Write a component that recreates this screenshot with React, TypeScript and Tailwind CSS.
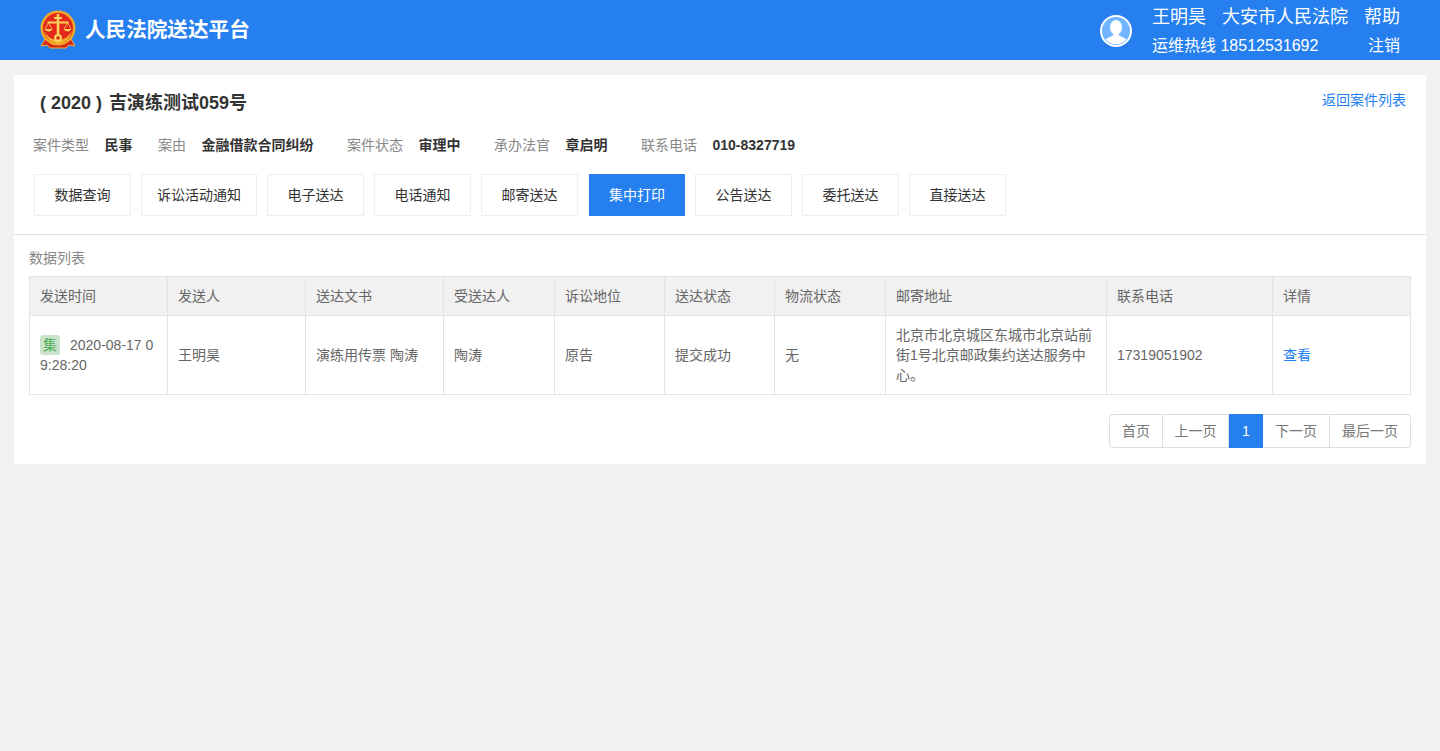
const font = "font-['Liberation_Sans','Noto_Sans_CJK_SC',sans-serif]";

const caseInfo = [
    { label: '案件类型', value: '民事', className: 'w-[125px]' },
    { label: '案由', value: '金融借款合同纠纷', className: 'w-[189px]' },
    { label: '案件状态', value: '审理中', className: 'w-[147px]' },
    { label: '承办法官', value: '章启明', className: 'w-[147px]' },
    { label: '联系电话', value: '010-8327719', className: '' },
];

const tabs = [
    { name: '数据查询', width: 'w-[97px]' },
    { name: '诉讼活动通知', width: 'w-[116px]' },
    { name: '电子送达', width: 'w-[97px]' },
    { name: '电话通知', width: 'w-[97px]' },
    { name: '邮寄送达', width: 'w-[97px]' },
    { name: '集中打印', width: 'ml-[1px] w-[96px]', active: true },
    { name: '公告送达', width: 'w-[97px]' },
    { name: '委托送达', width: 'w-[97px]' },
    { name: '直接送达', width: 'w-[97px]' },
];

const columns = [
    { name: '发送时间', width: 'w-[138px]' },
    { name: '发送人', width: 'w-[138px]' },
    { name: '送达文书', width: 'w-[138px]' },
    { name: '受送达人', width: 'w-[111px]' },
    { name: '诉讼地位', width: 'w-[110px]' },
    { name: '送达状态', width: 'w-[110px]' },
    { name: '物流状态', width: 'w-[111px]' },
    { name: '邮寄地址', width: 'w-[221px]' },
    { name: '联系电话', width: 'w-[166px]' },
    { name: '详情', width: '' },
];

const pages = [
    { name: '首页', className: 'w-[54px] rounded-l border-[#dddddd] text-[#777]' },
    { name: '上一页', className: 'w-[66px] border-l-0 border-[#dddddd] text-[#777]' },
    { name: '1', className: 'w-[34px] border-[#267fef] bg-[#267fef] text-white' },
    { name: '下一页', className: 'w-[67px] border-l-0 border-[#dddddd] text-[#777]' },
    { name: '最后一页', className: 'w-[81px] rounded-r border-l-0 border-[#dddddd] text-[#777]' },
];

function CourtEmblem() {
    return (
        <svg viewBox="0 0 36 40" className="h-[40px] w-[36px]">
            <path d="M5 29 L1 36 L7 35 L10 38 L26 38 L29 35 L35 36 L31 29 Z" fill="#d8261c" stroke="#f0b429" strokeWidth="1" />
            <circle cx="18" cy="18" r="17.5" fill="#f0a92a" />
            <circle cx="18" cy="18" r="15" fill="#e3281b" />
            <path d="M18 4 V25" stroke="#f9d35a" strokeWidth="2.6" fill="none" />
            <path d="M14 8 H22 M7.5 12.5 H28.5" stroke="#f9d35a" strokeWidth="2" fill="none" />
            <path d="M5 19 L8.5 13 L12 19 M24 19 L27.5 13 L31 19" stroke="#f9d35a" strokeWidth="0.8" fill="none" />
            <path d="M4.5 19 H12.5 Q8.5 24 4.5 19 Z M23.5 19 H31.5 Q27.5 24 23.5 19 Z" fill="#f9d35a" />
            <path d="M4 21 Q7 32 18 33.5 Q29 32 32 21 L29 25 Q25 30 18 30 Q11 30 7 25 Z" fill="#f3b533" />
            <circle cx="18" cy="28" r="4" fill="#f9d35a" />
            <circle cx="18" cy="28" r="1.8" fill="#d8261c" />
        </svg>
    );
}

function Avatar() {
    return (
        <svg viewBox="0 0 32 32" className="mt-[2px] h-[32px] w-[32px]">
            <circle cx="16" cy="16" r="15" fill="#6fb5ff" stroke="#ffffff" strokeWidth="2" />
            <ellipse cx="16" cy="12.5" rx="6" ry="7.5" fill="#ffffff" />
            <path d="M13.5 18 L13.5 20 C11 22 7.5 22.5 5.5 24.5 A13.8 13.8 0 0 0 26.5 24.5 C24.5 22.5 21 22 18.5 20 L18.5 18 Z" fill="#ffffff" />
        </svg>
    );
}

function Header() {
    return (
        <header className="flex h-[60px] items-center justify-between bg-[#267fef] px-[40px] text-white">
            <div className="flex items-center gap-[9px]">
                <CourtEmblem />
                <span className="text-[20.6px] font-bold">人民法院送达平台</span>
            </div>
            <div className="flex items-center gap-[20px]">
                <Avatar />
                <div>
                    <div className="flex h-[31px] items-center pt-[4px] text-[18px]">
                        <span className="w-[70px]">王明昊</span>
                        <span className="w-[142px]">大安市人民法院</span>
                        <span>帮助</span>
                    </div>
                    <div className="flex h-[29px] items-center justify-between text-[16px]">
                        <span>运维热线 18512531692</span>
                        <span>注销</span>
                    </div>
                </div>
            </div>
        </header>
    );
}

function CaseSummary() {
    return (
        <section className="border-b border-[#dfe0e2] pb-[18px]">
            <div className="flex items-start justify-between pl-[26px] pr-[20px] pt-[15px]">
                <h1 className="text-[18px] font-bold leading-[26px] text-[#333]">
                    ( 2020 ) <span className="ml-[2px]">吉演练测试059号</span>
                </h1>
                <a className="pt-[1px] text-[14px] leading-[18px] text-[#1e80f0]">返回案件列表</a>
            </div>
            <dl className="mt-[20px] flex pl-[19px] text-[14px] leading-[18px]">
                {caseInfo.map((item) => (
                    <div key={item.label} className={`flex shrink-0 gap-[15.5px] ${item.className}`}>
                        <dt className="text-[#888]">{item.label}</dt>
                        <dd className="font-bold text-[#333]">{item.value}</dd>
                    </div>
                ))}
            </dl>
            <nav className="mt-[20px] flex gap-[10px] pl-[20px]">
                {tabs.map((tab) => (
                    <button
                        key={tab.name}
                        type="button"
                        className={`h-[42px] border text-[14px] ${tab.width} ${
                            tab.active ? 'border-[#267fef] bg-[#267fef] text-white' : 'border-[#eeeeee] bg-white text-[#333]'
                        }`}
                    >
                        {tab.name}
                    </button>
                ))}
            </nav>
        </section>
    );
}

function DataTable() {
    return (
        <table className="w-[1382px] table-fixed border-collapse text-[14px] text-[#666]">
            <thead>
                <tr className="h-[39px] bg-[#f1f1f1]">
                    {columns.map((col) => (
                        <th key={col.name} className={`border border-[#e3e3e3] px-[10px] text-left font-normal ${col.width}`}>
                            {col.name}
                        </th>
                    ))}
                </tr>
            </thead>
            <tbody>
                <tr className="h-[79px] leading-[20px]">
                    <td className="border border-[#e3e3e3] px-[10px] break-all">
                        <span className="mr-[10px] inline-block h-[20px] w-[20px] rounded-[3px] bg-[#cbe2cb] text-center text-[#4caf50]">集</span>
                        2020-08-17 09:28:20
                    </td>
                    <td className="border border-[#e3e3e3] px-[10px]">王明昊</td>
                    <td className="border border-[#e3e3e3] px-[10px]">演练用传票 陶涛</td>
                    <td className="border border-[#e3e3e3] px-[10px]">陶涛</td>
                    <td className="border border-[#e3e3e3] px-[10px]">原告</td>
                    <td className="border border-[#e3e3e3] px-[10px]">提交成功</td>
                    <td className="border border-[#e3e3e3] px-[10px]">无</td>
                    <td className="border border-[#e3e3e3] px-[10px]">北京市北京城区东城市北京站前街1号北京邮政集约送达服务中心。</td>
                    <td className="border border-[#e3e3e3] px-[10px]">17319051902</td>
                    <td className="border border-[#e3e3e3] px-[10px] text-[#1e80f0]">查看</td>
                </tr>
            </tbody>
        </table>
    );
}

function Pagination() {
    return (
        <div className="mt-[19px] flex justify-end">
            {pages.map((page) => (
                <span key={page.name} className={`flex h-[34px] items-center justify-center border text-[14px] ${page.className}`}>
                    {page.name}
                </span>
            ))}
        </div>
    );
}

export default function App() {
    return (
        <div className={`min-h-[751px] bg-[#f0f1f3] ${font}`}>
            <Header />
            <main className="mx-[14px] mt-[15px] bg-white pb-[16px]">
                <CaseSummary />
                <div className="px-[15px]">
                    <div className="pb-[9px] pt-[14px] text-[14px] leading-[18px] text-[#888]">数据列表</div>
                    <DataTable />
                    <Pagination />
                </div>
            </main>
        </div>
    );
}
